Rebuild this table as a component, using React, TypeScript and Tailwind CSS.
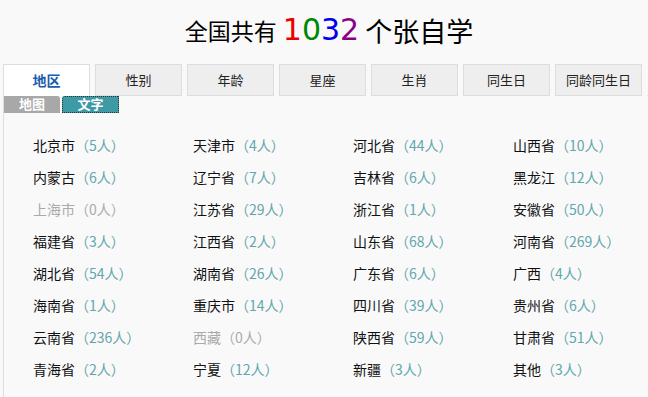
import React from "react";

const TABS = ["地区", "性别", "年龄", "星座", "生肖", "同生日", "同龄同生日"];

const REGIONS: [string, number][] = [
  ["北京市", 5], ["天津市", 4], ["河北省", 44], ["山西省", 10],
  ["内蒙古", 6], ["辽宁省", 7], ["吉林省", 6], ["黑龙江", 12],
  ["上海市", 0], ["江苏省", 29], ["浙江省", 1], ["安徽省", 50],
  ["福建省", 3], ["江西省", 2], ["山东省", 68], ["河南省", 269],
  ["湖北省", 54], ["湖南省", 26], ["广东省", 6], ["广西", 4],
  ["海南省", 1], ["重庆市", 14], ["四川省", 39], ["贵州省", 6],
  ["云南省", 236], ["西藏", 0], ["陕西省", 59], ["甘肃省", 51],
  ["青海省", 2], ["宁夏", 12], ["新疆", 3], ["其他", 3],
];

const cjk = { fontFamily: '"Noto Sans CJK SC", sans-serif' };

export default function App() {
  return (
    <div className="h-[397px] w-[648px] overflow-hidden bg-[#f9f9f9] text-[#111]" style={cjk}>
      {/* 标题 */}
      <div className="flex h-[64px] items-center justify-center pb-1 pl-[10px]">
        <span className="text-[23px] leading-none text-black">全国共有</span>
        <span
          className="mx-[6px] text-[30px] leading-none"
          style={{ fontFamily: '"DejaVu Sans", sans-serif' }}
        >
          <span className="text-[#ee0000]">1</span>
          <span className="text-[#008800]">0</span>
          <span className="text-[#0000ee]">3</span>
          <span className="text-[#880088]">2</span>
        </span>
        <span className="text-[27px] leading-none text-black">个张自学</span>
      </div>

      {/* 标签页 */}
      <div className="flex h-[32px] pl-[3px]">
        {TABS.map((t, i) => (
          <div
            key={t}
            className={
              i === 0
                ? "mr-[5px] flex w-[87px] items-center justify-center border border-b-0 border-[#dddddd] bg-white text-[14px] font-bold text-[#1a5cb0]"
                : "mr-[5px] flex w-[87px] items-center justify-center border border-b border-[#dddddd] bg-[#eeeeee] text-[13px] text-[#222]"
            }
          >
            {t}
          </div>
        ))}
        <div className="flex-1 border-b border-[#dddddd]" />
      </div>

      {/* 内容 */}
      <div className="ml-[3px] h-full border-l border-[#dddddd]">
        <div className="flex h-[17px] gap-[2px]">
          <div className="flex w-[56px] items-center justify-center rounded-tr-[3px] bg-[#a8a8a8] pb-[2px] text-[13px] font-bold leading-none text-white">
            地图
          </div>
          <div className="flex w-[57px] items-center justify-center rounded-tl-[3px] border border-dotted border-[#333] bg-[#3e9ba6] pb-[2px] text-[13px] font-bold leading-none text-white">
            文字
          </div>
        </div>

        <div className="grid grid-cols-[repeat(4,160px)] pl-[29px] pt-[16px]">
          {REGIONS.map(([name, n]) => (
            <div
              key={name}
              className={
                n === 0
                  ? "h-[32px] text-[14px] leading-[32px] text-[#aaaaaa]"
                  : "h-[32px] text-[14px] leading-[32px] text-[#111]"
              }
            >
              {name}
              <span className={n === 0 ? "text-[#aaaaaa]" : "text-[#62a6ae]"}>（{n}人）</span>
            </div>
          ))}
        </div>
      </div>
    </div>
  );
}
